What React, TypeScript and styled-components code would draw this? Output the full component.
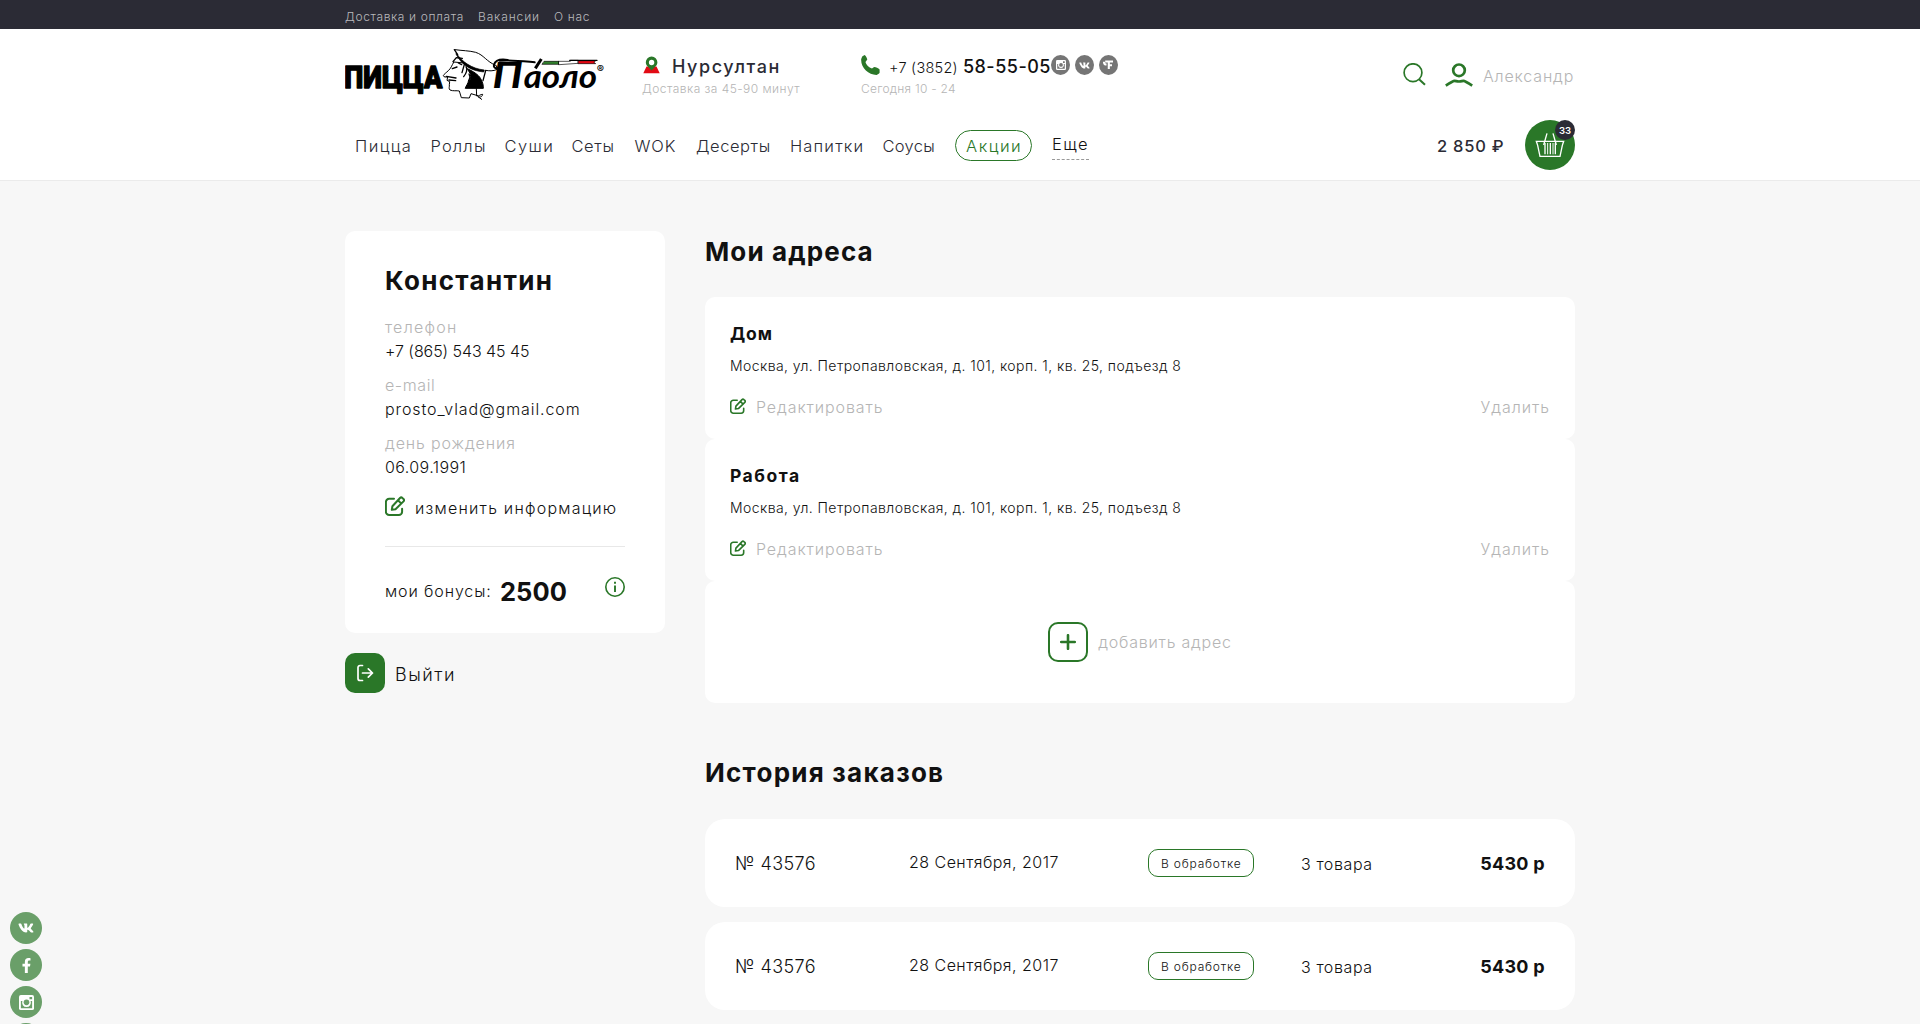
import React from "react";
import styled, { createGlobalStyle } from "styled-components";
import { FaVk, FaFacebookF } from "react-icons/fa";

const green = "#2a7728";
const dark = "#2b2b35";
const ink = "#111111";
const muted = "#b5b5b5";

const GlobalStyle = createGlobalStyle`
  *, *::before, *::after { box-sizing: border-box; }
  body {
    margin: 0;
    background: #f7f7f7;
    color: ${ink};
    font-family: Inter, "Noto Sans", sans-serif;
    height: 1024px;
    overflow: hidden;
  }
  svg { display: block; flex: none; }
  h1, h2, h3, p { margin: 0; }
`;

interface TextProps {
  $size?: number;
  $weight?: number;
  $ls?: number;
  $lh?: number;
  $color?: string;
}

const Text = styled.span<TextProps>`
  display: block;
  white-space: nowrap;
  font-size: ${(p) => p.$size ?? 16}px;
  font-weight: ${(p) => p.$weight ?? 300};
  letter-spacing: ${(p) => p.$ls ?? 0}px;
  line-height: ${(p) => p.$lh ?? 20}px;
  color: ${(p) => p.$color ?? ink};
`;

const Container = styled.div`
  width: 1230px;
  margin: 0 auto;
`;

const TopBar = styled.div`
  height: 29px;
  background: ${dark};
`;

const TopLinks = styled(Container)`
  display: grid;
  grid-template-columns: 133px 76px auto;
  padding-top: 7px;
`;

const Header = styled.header`
  height: 152px;
  background: #fff;
  border-bottom: 1px solid #ebebeb;
`;

const HeaderRow = styled(Container)`
  display: flex;
  align-items: flex-start;
  height: 91px;
  padding-top: 17px;
`;

const Place = styled.div`
  width: 218px;
  margin-left: 36px;
  padding-top: 9px;
`;

const Phone = styled.div`
  width: 191px;
  padding: 9px 0 0 1px;
`;

const IconLine = styled.div`
  display: flex;
  align-items: flex-start;
  height: 24px;
`;

const PlaceName = styled(Text)`
  margin-left: 11px;
`;

const PhoneCode = styled(Text)`
  margin: 1px 0 0 9px;
  width: 75px;
`;

const Socials = styled.div`
  display: flex;
  gap: 5px;
  padding-top: 9px;
`;

const SocialDot = styled.a`
  display: flex;
  align-items: center;
  justify-content: center;
  width: 19px;
  height: 20px;
  border-radius: 50%;
  background: #757575;
  color: #fff;
`;

const Account = styled.div`
  display: flex;
  align-items: flex-start;
  margin-left: auto;
  padding-top: 17px;
`;

const UserName = styled(Text)`
  width: 92px;
  margin-left: 10px;
  padding-top: 3px;
`;

const UserGlyph = styled.div`
  margin-left: 19px;
`;

const MenuRow = styled(Container)`
  display: flex;
  align-items: center;
  height: 50px;
`;

const Menu = styled.nav`
  display: grid;
  grid-template-columns: 75.5px 74px 67px 63px 61.5px 94px 92.5px 72.5px 97px auto;
  align-items: center;
  padding: 2px 0 0 10px;
`;

const Pill = styled.a`
  width: 77px;
  height: 31px;
  margin-bottom: 2px;
  padding-left: 10px;
  border: 1px solid ${green};
  border-radius: 16px;
`;

const More = styled.a`
  width: 37px;
  height: 29px;
  margin-bottom: 2px;
  border-bottom: 1px dashed #999;
`;

const Total = styled(Text)`
  margin: 2px 0 0 auto;
  width: 88px;
`;

const Basket = styled.a`
  position: relative;
  width: 50px;
  height: 50px;
  border-radius: 50%;
  background: ${green};
`;

const Count = styled.span`
  position: absolute;
  top: 0;
  right: 0;
  width: 20px;
  height: 20px;
  border-radius: 50%;
  background: ${dark};
  color: #fff;
  font-size: 9.5px;
  font-weight: 600;
  line-height: 21px;
  text-align: center;
`;

const Page = styled(Container)`
  display: grid;
  grid-template-columns: 320px 870px;
  column-gap: 40px;
  align-items: start;
  padding-top: 50px;
`;

const Profile = styled.section`
  height: 402px;
  padding: 34px 40px 28px;
  border-radius: 10px;
  background: #fff;
`;

const Fields = styled.div`
  display: grid;
  row-gap: 11px;
  margin-top: 19px;
`;

const EditRow = styled.a`
  display: flex;
  gap: 10px;
  height: 20px;
  margin-top: 17px;
`;

const EditText = styled(Text)`
  padding-top: 2px;
`;

const Rule = styled.hr`
  height: 1px;
  margin: 30px 0;
  border: 0;
  background: #e8e8e8;
`;

const Bonus = styled.div`
  display: flex;
  align-items: flex-start;
  justify-content: space-between;
`;

const BonusText = styled.div`
  display: grid;
  grid-template-columns: 115px auto;
`;

const Exit = styled.a`
  display: flex;
  gap: 10px;
  margin-top: 20px;
`;

const ExitButton = styled.span`
  display: flex;
  align-items: center;
  justify-content: center;
  width: 40px;
  height: 40px;
  border-radius: 10px;
  background: ${green};
`;

const Title = styled(Text)`
  margin-bottom: 25px;
`;

const HistoryTitle = styled(Text)`
  margin: 50px 0 26px;
`;

const AddressCard = styled.article`
  height: 142px;
  padding: 25px 25px 0;
  border-radius: 10px;
  background: #fff;
`;

const AddressLine = styled(Text)`
  margin-top: 10px;
`;

const Actions = styled.div`
  display: flex;
  justify-content: space-between;
  margin-top: 20px;
`;

const ActionEdit = styled.a`
  display: flex;
  gap: 10px;
`;

const SmallIcon = styled.span`
  padding-top: 2px;
`;

const AddCard = styled.div`
  display: flex;
  align-items: center;
  justify-content: center;
  gap: 10px;
  height: 122px;
  border-radius: 10px;
  background: #fff;
`;

const PlusBox = styled.span`
  display: flex;
  align-items: center;
  justify-content: center;
  width: 40px;
  height: 40px;
  border: 2px solid ${green};
  border-radius: 10px;
`;

const Orders = styled.div`
  display: grid;
  row-gap: 15px;
`;

const Order = styled.article`
  display: grid;
  grid-template-columns: 174px 239px 153px 1fr auto;
  align-items: center;
  height: 88px;
  padding: 2px 30px 0 30px;
  border-radius: 20px;
  background: #fff;
`;

const OrderDate = styled(Text)`
  margin-bottom: 5px;
`;

const Status = styled.span`
  width: 106px;
  height: 28px;
  margin-bottom: 2px;
  padding-left: 12px;
  border: 1px solid ${green};
  border-radius: 10px;
`;

const ShareRail = styled.aside`
  position: fixed;
  left: 10px;
  top: 912px;
  display: grid;
  row-gap: 5px;
`;

const ShareDot = styled.a`
  display: flex;
  align-items: center;
  justify-content: center;
  width: 32px;
  height: 32px;
  border-radius: 50%;
  background: #6a9f69;
  color: #fff;
`;

const Logo = () => (
  <svg width="261" height="56" viewBox="30 138 783 168" fill="none" stroke="#000" strokeLinejoin="round" strokeLinecap="round">
    <text x="28" y="263" fontFamily="Roboto, sans-serif" fontWeight="900" fontSize="94" textLength="294" lengthAdjust="spacingAndGlyphs" fill="#000" stroke="#000" strokeWidth="4">ПИЦЦА</text>
    {/* cap */}
    <path d="M360 149c20 3 44 3 62 8 25 8 31 27 62 40l3 11c-14 6-24 5-35 3" strokeWidth="3" fill="#fff" />
    <path d="M358 149l10 15M354 185l10-12 18 2" strokeWidth="4" />
    <path d="M364 160c18 26 46 46 84 50l-2 6c-40-4-66-22-82-52z" fill="#000" strokeWidth="2" />
    {/* profile */}
    <path d="M356 186l32 3M356 187c-6 10-8 18-16 25-6 6-13 10-15 15 1 5 8 4 13 4l-2 10 8 4-1 9c1 6-3 12 2 16 9 4 20 1 28 3l6 20 24 1 5-13 20 6" strokeWidth="3" />
    <path d="M334 229l29 5M342 240l20 2M352 206l14-5M370 189l10 5" strokeWidth="4" />
    <path d="M389 190l-8 28M393 200c6 8 0 22-7 30M402 222c5 8 4 12 0 18M452 212l-8 30" strokeWidth="4" />
    {/* hair */}
    <path d="M391 264c4-10 8-12 10-24 6 4 8-10 4-20l-8-14c14 6 34 18 40 30 7 12 8 20 8 28z" fill="#000" strokeWidth="3" />
    <path d="M424 266l1 22c6 2 12-6 18-5-2 9-8 9-14 7l11 8" strokeWidth="3" />
    <path d="M518 180c-20-3-37 1-41 14-3 12 12 15 16 4" strokeWidth="6" />
    <text x="472" y="263" fontFamily="Lato, sans-serif" fontStyle="italic" fontWeight="700" fontSize="108" textLength="92" lengthAdjust="spacingAndGlyphs" fill="#000" stroke="none">П</text>
    <text x="566" y="263" fontFamily="Lato, sans-serif" fontStyle="italic" fontWeight="700" fontSize="100" textLength="220" lengthAdjust="spacingAndGlyphs" fill="#000" stroke="none">аоло</text>
    {/* flag ribbon */}
    <path d="M494 182c35-3 65 1 105 5" strokeWidth="6" />
    <path d="M601 205l18-28" strokeWidth="9" strokeLinecap="butt" />
    <path d="M628 184h44v9h-50z" fill="#31802d" strokeWidth="2" />
    <path d="M672 184l34 0 0-3h24v9l-58 4z" fill="#fff" strokeWidth="2" />
    <path d="M730 182h52l-5 5 5 4h-52z" fill="#e30613" strokeWidth="2" />
    <path d="M704 181h82" strokeWidth="4" />
    <text x="785" y="218" fontFamily="Inter, sans-serif" fontWeight="700" fontSize="33" fill="#000" stroke="none">®</text>
  </svg>
);

const PinIcon = () => (
  <svg width="19" height="19" viewBox="0 0 19 19">
    <path d="M4.5 11.5h10l3.200 6.700H1.300z" fill="#e20a14" />
    <path d="M9.600 1.500a5.800 5.800 0 0 0-5.800 5.800c0 3.600 3.300 5.200 5.800 8.200 2.500-3 5.800-4.600 5.800-8.200A5.800 5.800 0 0 0 9.600 1.500zm0 3.300a2.700 2.700 0 1 1 0 5.400 2.700 2.700 0 0 1 0-5.400z" fill={green} fillRule="evenodd" />
  </svg>
);

const PhoneIcon = () => (
  <svg width="19" height="20" viewBox="0 0 19 20">
    <path d="M1.200 1.500 3.500 0c1.500.8 2.400 2.800 2.800 4.600L4.500 7c.6 2.600 3.500 5.700 6.500 6.500l2.100-1.600c2 .2 4.100 1 5.500 2.500v3.400c-.6 1-1.800 1.800-3 2.100C7.500 20-.5 12.500.2 4z" fill={green} />
  </svg>
);

const CameraIcon = ({ size, hole }: { size: number; hole: string }) => (
  <svg width={size} height={size} viewBox="0 0 16 16">
    <rect width="16" height="16" rx="2" fill="#fff" />
    <path d="M2 6.500v7.500h12V6.500h-1.600a4.700 4.700 0 1 1-8.800 0zM11.200 2h2.800v2.600h-2.800z" fill={hole} />
    <circle cx="8" cy="7.800" r="3" fill={hole} />
  </svg>
);

const FlagIcon = () => (
  <svg width="11" height="10" viewBox="0 0 11 10" fill="none" stroke="#fff" strokeWidth="2.100">
    <path d="M1 1.800c0 2 1 2.700 2.500 2.700M2.200 1.500H10M5.800 1.500V9M5.800 5.200H9" />
  </svg>
);

const SearchIcon = () => (
  <svg width="23" height="23" viewBox="0 0 23 23" fill="none" stroke={green} strokeWidth="1.700">
    <circle cx="10" cy="9.700" r="8.900" />
    <path d="M16 16.200l6 5.600" strokeWidth="2" />
  </svg>
);

const UserIcon = () => (
  <svg width="28" height="24" viewBox="0 0 28 24" fill="none" stroke={green}>
    <circle cx="14" cy="7.300" r="5.800" strokeWidth="2.700" />
    <path d="M.8 22.600c4.500-3 7.200-4.800 8.700-4.800 1.600 0 2 .7 4.500.7s2.900-.7 4.500-.7c1.500 0 4.200 1.800 8.700 4.800" strokeWidth="2.700" />
  </svg>
);

const BasketIcon = () => (
  <svg width="50" height="50" viewBox="0 0 150 150" fill="none" stroke="#fff" strokeWidth="4">
    <path d="M34 64h82l-4 12-7 33H45l-7-33zM56 75l10-35M94 75L84 40" />
    <path d="M60 69v34M76 69v34M91 69v34" strokeWidth="4" />
    <path d="M68 69v34M84 69v34" strokeWidth="3" />
  </svg>
);

const EditIcon = ({ size }: { size: number }) => (
  <svg width={size} height={size} viewBox="0 0 20 20" fill="none" stroke={green} strokeWidth="2" strokeLinecap="round" strokeLinejoin="round">
    <path d="M9 2.800H4.200A3.300 3.300 0 0 0 .9 6.100v9.600A3.300 3.300 0 0 0 4.200 19h9.600a3.300 3.300 0 0 0 3.300-3.300v-2.900" />
    <path d="M7.400 10.200 15 2a1.700 1.700 0 0 1 2.400 0l1.100 1a1.700 1.700 0 0 1 0 2.400l-8 7.800-3.700.6zM13 4.300l3.300 3.300" />
  </svg>
);

const InfoIcon = () => (
  <svg width="20" height="20" viewBox="0 0 20 20" fill="none" stroke={green} strokeWidth="1.600">
    <circle cx="10" cy="10" r="9.200" />
    <path d="M10 8.500v6.500M10 4.700v2" strokeWidth="1.900" />
  </svg>
);

const ExitIcon = () => (
  <svg width="18" height="18" viewBox="0 0 18 18" fill="none" stroke="#fff" strokeWidth="1.700" strokeLinecap="round" strokeLinejoin="round">
    <path d="M6.500 1.500H4a2 2 0 0 0-2 2v11a2 2 0 0 0 2 2h2.500M6.500 9H16.500M12.300 4.800 16.500 9l-4.200 4.200" />
  </svg>
);

const PlusIcon = () => (
  <svg width="16" height="16" viewBox="0 0 16 16" stroke={green} strokeWidth="2.600" strokeLinecap="round">
    <path d="M8 1.200v13.600M1.200 8h13.600" />
  </svg>
);

const menu: [string, number][] = [
  ["Пицца", 1.45], ["Роллы", 1.15], ["Суши", 1.4], ["Сеты", 0.6], ["WOK", 0.85],
  ["Десерты", 0.57], ["Напитки", 1.15], ["Соусы", 0.27],
];

const fields: [string, number, string, number][] = [
  ["телефон", 1.25, "+7 (865) 543 45 45", -0.06],
  ["e-mail", 0.6, "prosto_vlad@gmail.com", 0.92],
  ["день рождения", 0.88, "06.09.1991", 0.4],
];

const addresses: [string, number][] = [["Дом", 0.85], ["Работа", 1.5]];

export default function App() {
  return (
    <>
      <GlobalStyle />
      <TopBar>
        <TopLinks>
          <Text $size={12} $ls={0.62} $color="#b9b9bc">Доставка и оплата</Text>
          <Text $size={12} $ls={0.87} $color="#b9b9bc">Вакансии</Text>
          <Text $size={12} $ls={0.65} $color="#b9b9bc">О нас</Text>
        </TopLinks>
      </TopBar>
      <Header>
        <HeaderRow>
          <Logo />
          <Place>
            <IconLine>
              <PinIcon />
              <PlaceName $size={18} $weight={500} $ls={1.58} $lh={24} $color={dark}>Нурсултан</PlaceName>
            </IconLine>
            <Text $size={12} $ls={0.45} $color={muted}>Доставка за 45-90 минут</Text>
          </Place>
          <Phone>
            <IconLine>
              <PhoneIcon />
              <PhoneCode $size={14.5} $ls={0.25} $lh={24}>+7 (3852)</PhoneCode>
              <Text $size={18} $weight={500} $ls={0.5} $lh={24}>58-55-05</Text>
            </IconLine>
            <Text $size={12} $ls={0.25} $color={muted}>Сегодня 10 - 24</Text>
          </Phone>
          <Socials>
            <SocialDot><CameraIcon size={10} hole="#757575" /></SocialDot>
            <SocialDot><FaVk size={11} /></SocialDot>
            <SocialDot><FlagIcon /></SocialDot>
          </Socials>
          <Account>
            <SearchIcon />
            <UserGlyph><UserIcon /></UserGlyph>
            <UserName $ls={0.82} $color={muted}>Александр</UserName>
          </Account>
        </HeaderRow>
        <MenuRow>
          <Menu>
            {menu.map(([label, ls]) => (
              <Text key={label} $size={16.5} $ls={ls} $color={dark}>{label}</Text>
            ))}
            <Pill><Text $size={16.5} $ls={1.55} $lh={31} $color={green}>Акции</Text></Pill>
            <More><Text $size={16.5} $ls={1.4} $lh={27}>Еще</Text></More>
          </Menu>
          <Total $size={16.5} $weight={500} $ls={0.75} $color={dark}>2 850 ₽</Total>
          <Basket>
            <BasketIcon />
            <Count>33</Count>
          </Basket>
        </MenuRow>
      </Header>
      <Page>
        <div>
          <Profile>
            <Text as="h1" $size={26} $weight={700} $ls={1.3} $lh={32}>Константин</Text>
            <Fields>
              {fields.map(([label, labelLs, value, valueLs]) => (
                <div key={label}>
                  <Text $ls={labelLs} $lh={23.5} $color={muted}>{label}</Text>
                  <Text $ls={valueLs} $lh={23.5}>{value}</Text>
                </div>
              ))}
            </Fields>
            <EditRow>
              <EditIcon size={20} />
              <EditText $ls={1.23}>изменить информацию</EditText>
            </EditRow>
            <Rule />
            <Bonus>
              <BonusText>
                <Text $ls={0.88} $lh={29}>мои бонусы:</Text>
                <Text $size={25.5} $weight={700} $ls={0.03} $lh={29}>2500</Text>
              </BonusText>
              <InfoIcon />
            </Bonus>
          </Profile>
          <Exit>
            <ExitButton><ExitIcon /></ExitButton>
            <Text $size={18} $ls={1.5} $lh={43}>Выйти</Text>
          </Exit>
        </div>
        <main>
          <Title as="h2" $size={26} $weight={700} $ls={1.13} $lh={41}>Мои адреса</Title>
          {addresses.map(([name, ls]) => (
            <AddressCard key={name}>
              <Text as="h3" $size={17.5} $weight={700} $ls={ls} $lh={24}>{name}</Text>
              <AddressLine $size={14} $ls={0.43}>Москва, ул. Петропавловская, д. 101, корп. 1, кв. 25, подъезд 8</AddressLine>
              <Actions>
                <ActionEdit>
                  <SmallIcon><EditIcon size={16} /></SmallIcon>
                  <Text $ls={0.9} $lh={23} $color={muted}>Редактировать</Text>
                </ActionEdit>
                <Text $ls={0.95} $lh={23} $color={muted}>Удалить</Text>
              </Actions>
            </AddressCard>
          ))}
          <AddCard>
            <PlusBox><PlusIcon /></PlusBox>
            <Text $ls={0.78} $lh={23} $color={muted}>добавить адрес</Text>
          </AddCard>
          <HistoryTitle as="h2" $size={26} $weight={700} $ls={1.24} $lh={40}>История заказов</HistoryTitle>
          <Orders>
            {[0, 1].map((n) => (
              <Order key={n}>
                <Text $size={18} $ls={0.4} $lh={22}>№ 43576</Text>
                <OrderDate $ls={0.47}>28 Сентября, 2017</OrderDate>
                <Status><Text $size={12} $ls={0.8} $lh={27}>В обработке</Text></Status>
                <Text $ls={0.6}>3 товара</Text>
                <Text $size={18} $weight={700} $ls={0.3} $lh={22}>5430 р</Text>
              </Order>
            ))}
          </Orders>
        </main>
      </Page>
      <ShareRail>
        <ShareDot><FaVk size={16} /></ShareDot>
        <ShareDot><FaFacebookF size={15} /></ShareDot>
        <ShareDot><CameraIcon size={15} hole="#6a9f69" /></ShareDot>
        <ShareDot />
      </ShareRail>
    </>
  );
}
